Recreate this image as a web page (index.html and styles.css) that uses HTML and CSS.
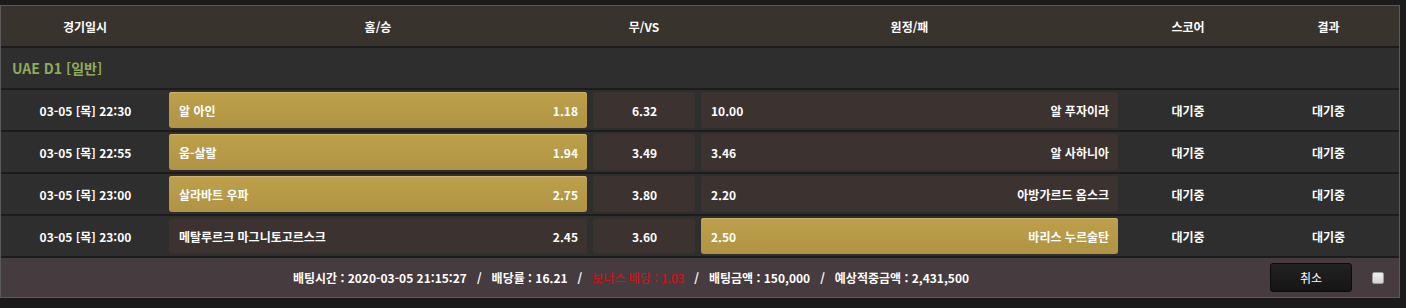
FILE: index.html
```html
<!DOCTYPE html>
<html lang="ko">
<head>
<meta charset="utf-8">
<link rel="stylesheet" href="styles.css">
</head>
<body>
<div class="board">
  <div class="grid head">
    <div class="hc">경기일시</div>
    <div class="hc">홈/승</div>
    <div class="hc">무/VS</div>
    <div class="hc">원정/패</div>
    <div class="hc">스코어</div>
    <div class="hc">결과</div>
  </div>
  <div class="league">UAE D1 [일반]</div>
  <div class="grid row">
    <div class="date">03-05 [목] 22:30</div>
    <div class="btn on"><span>알 아인</span><span>1.18</span></div>
    <div class="btn draw">6.32</div>
    <div class="btn"><span>10.00</span><span>알 푸자이라</span></div>
    <div class="st">대기중</div>
    <div class="st">대기중</div>
  </div>
  <div class="grid row">
    <div class="date">03-05 [목] 22:55</div>
    <div class="btn on"><span>움-살랄</span><span>1.94</span></div>
    <div class="btn draw">3.49</div>
    <div class="btn"><span>3.46</span><span>알 사하니아</span></div>
    <div class="st">대기중</div>
    <div class="st">대기중</div>
  </div>
  <div class="grid row">
    <div class="date">03-05 [목] 23:00</div>
    <div class="btn on"><span>살라바트 우파</span><span>2.75</span></div>
    <div class="btn draw">3.80</div>
    <div class="btn"><span>2.20</span><span>아방가르드 옴스크</span></div>
    <div class="st">대기중</div>
    <div class="st">대기중</div>
  </div>
  <div class="grid row">
    <div class="date">03-05 [목] 23:00</div>
    <div class="btn"><span>메탈루르크 마그니토고르스크</span><span>2.45</span></div>
    <div class="btn draw">3.60</div>
    <div class="btn on"><span>2.50</span><span>바리스 누르술탄</span></div>
    <div class="st">대기중</div>
    <div class="st">대기중</div>
  </div>
  <div class="foot">
    <div class="summary">
      <span>배팅시간 : 2020-03-05 21:15:27</span><span class="sep">/</span><span>배당률 : 16.21</span><span class="sep">/</span><span class="bonus">보너스 배당 : 1.03</span><span class="sep">/</span><span>배팅금액 : 150,000</span><span class="sep">/</span><span>예상적중금액 : 2,431,500</span>
    </div>
    <div class="cancel">취소</div>
    <div class="check"></div>
  </div>
</div>
</body>
</html>
```

FILE: styles.css
```css
* { box-sizing: border-box; }
html, body {
  margin: 0;
  padding: 0;
  background: #1b1b1b;
}
body {
  font-family: "Noto Sans CJK KR", "Noto Sans", sans-serif;
  font-size: 12px;
  font-weight: bold;
  color: #fff;
  padding-top: 5px;
}
.board {
  width: 1400px;
  border: 1px solid #5a5a5a;
  background: #1c1c1c;
  display: flex;
  flex-direction: column;
  gap: 2px;
}
.grid {
  display: grid;
  grid-template-columns: 168px 418px 114px 417px 140px 1fr;
  align-items: center;
}
.head {
  height: 40px;
  background: #39332d;
}
.hc {
  text-align: center;
}
.league {
  height: 40px;
  background: #2e2e2e;
  color: #8fab5a;
  font-size: 14px;
  display: flex;
  align-items: center;
  padding-left: 11px;
}
.row {
  height: 40px;
  background: #2e2e2e;
}
.date {
  text-align: center;
  padding-left: 1px;
}
.btn {
  height: 36px;
  border-radius: 3px;
  background: #3c3331;
  display: flex;
  align-items: center;
  justify-content: space-between;
  padding: 0 9px 0 10px;
}
.btn.draw {
  justify-content: center;
  margin: 0 6px;
}
.btn.on {
  background: linear-gradient(#bea04b, #b09444);
  box-shadow: inset 0 1px 0 #cdb36a;
}
.st {
  text-align: center;
}
.foot {
  height: 39px;
  background: #463b3f;
  display: flex;
  align-items: center;
}
.summary {
  flex: 1;
  text-align: center;
  padding-left: 2px;
}
.sep {
  margin: 0 10px;
}
.bonus {
  color: #e10e0e;
  font-weight: normal;
}
.cancel {
  width: 82px;
  height: 29px;
  margin: 0 20px 0 11px;
  border: 1px solid #0b0b0b;
  border-radius: 3px;
  background: linear-gradient(#222, #151515);
  display: flex;
  align-items: center;
  justify-content: center;
  font-weight: normal;
}
.check {
  width: 12px;
  height: 12px;
  margin-right: 15px;
  border-radius: 2px;
  background: linear-gradient(#f0f0f0, #d4d4d4);
  border: 1px solid #9a9a9a;
}
```
